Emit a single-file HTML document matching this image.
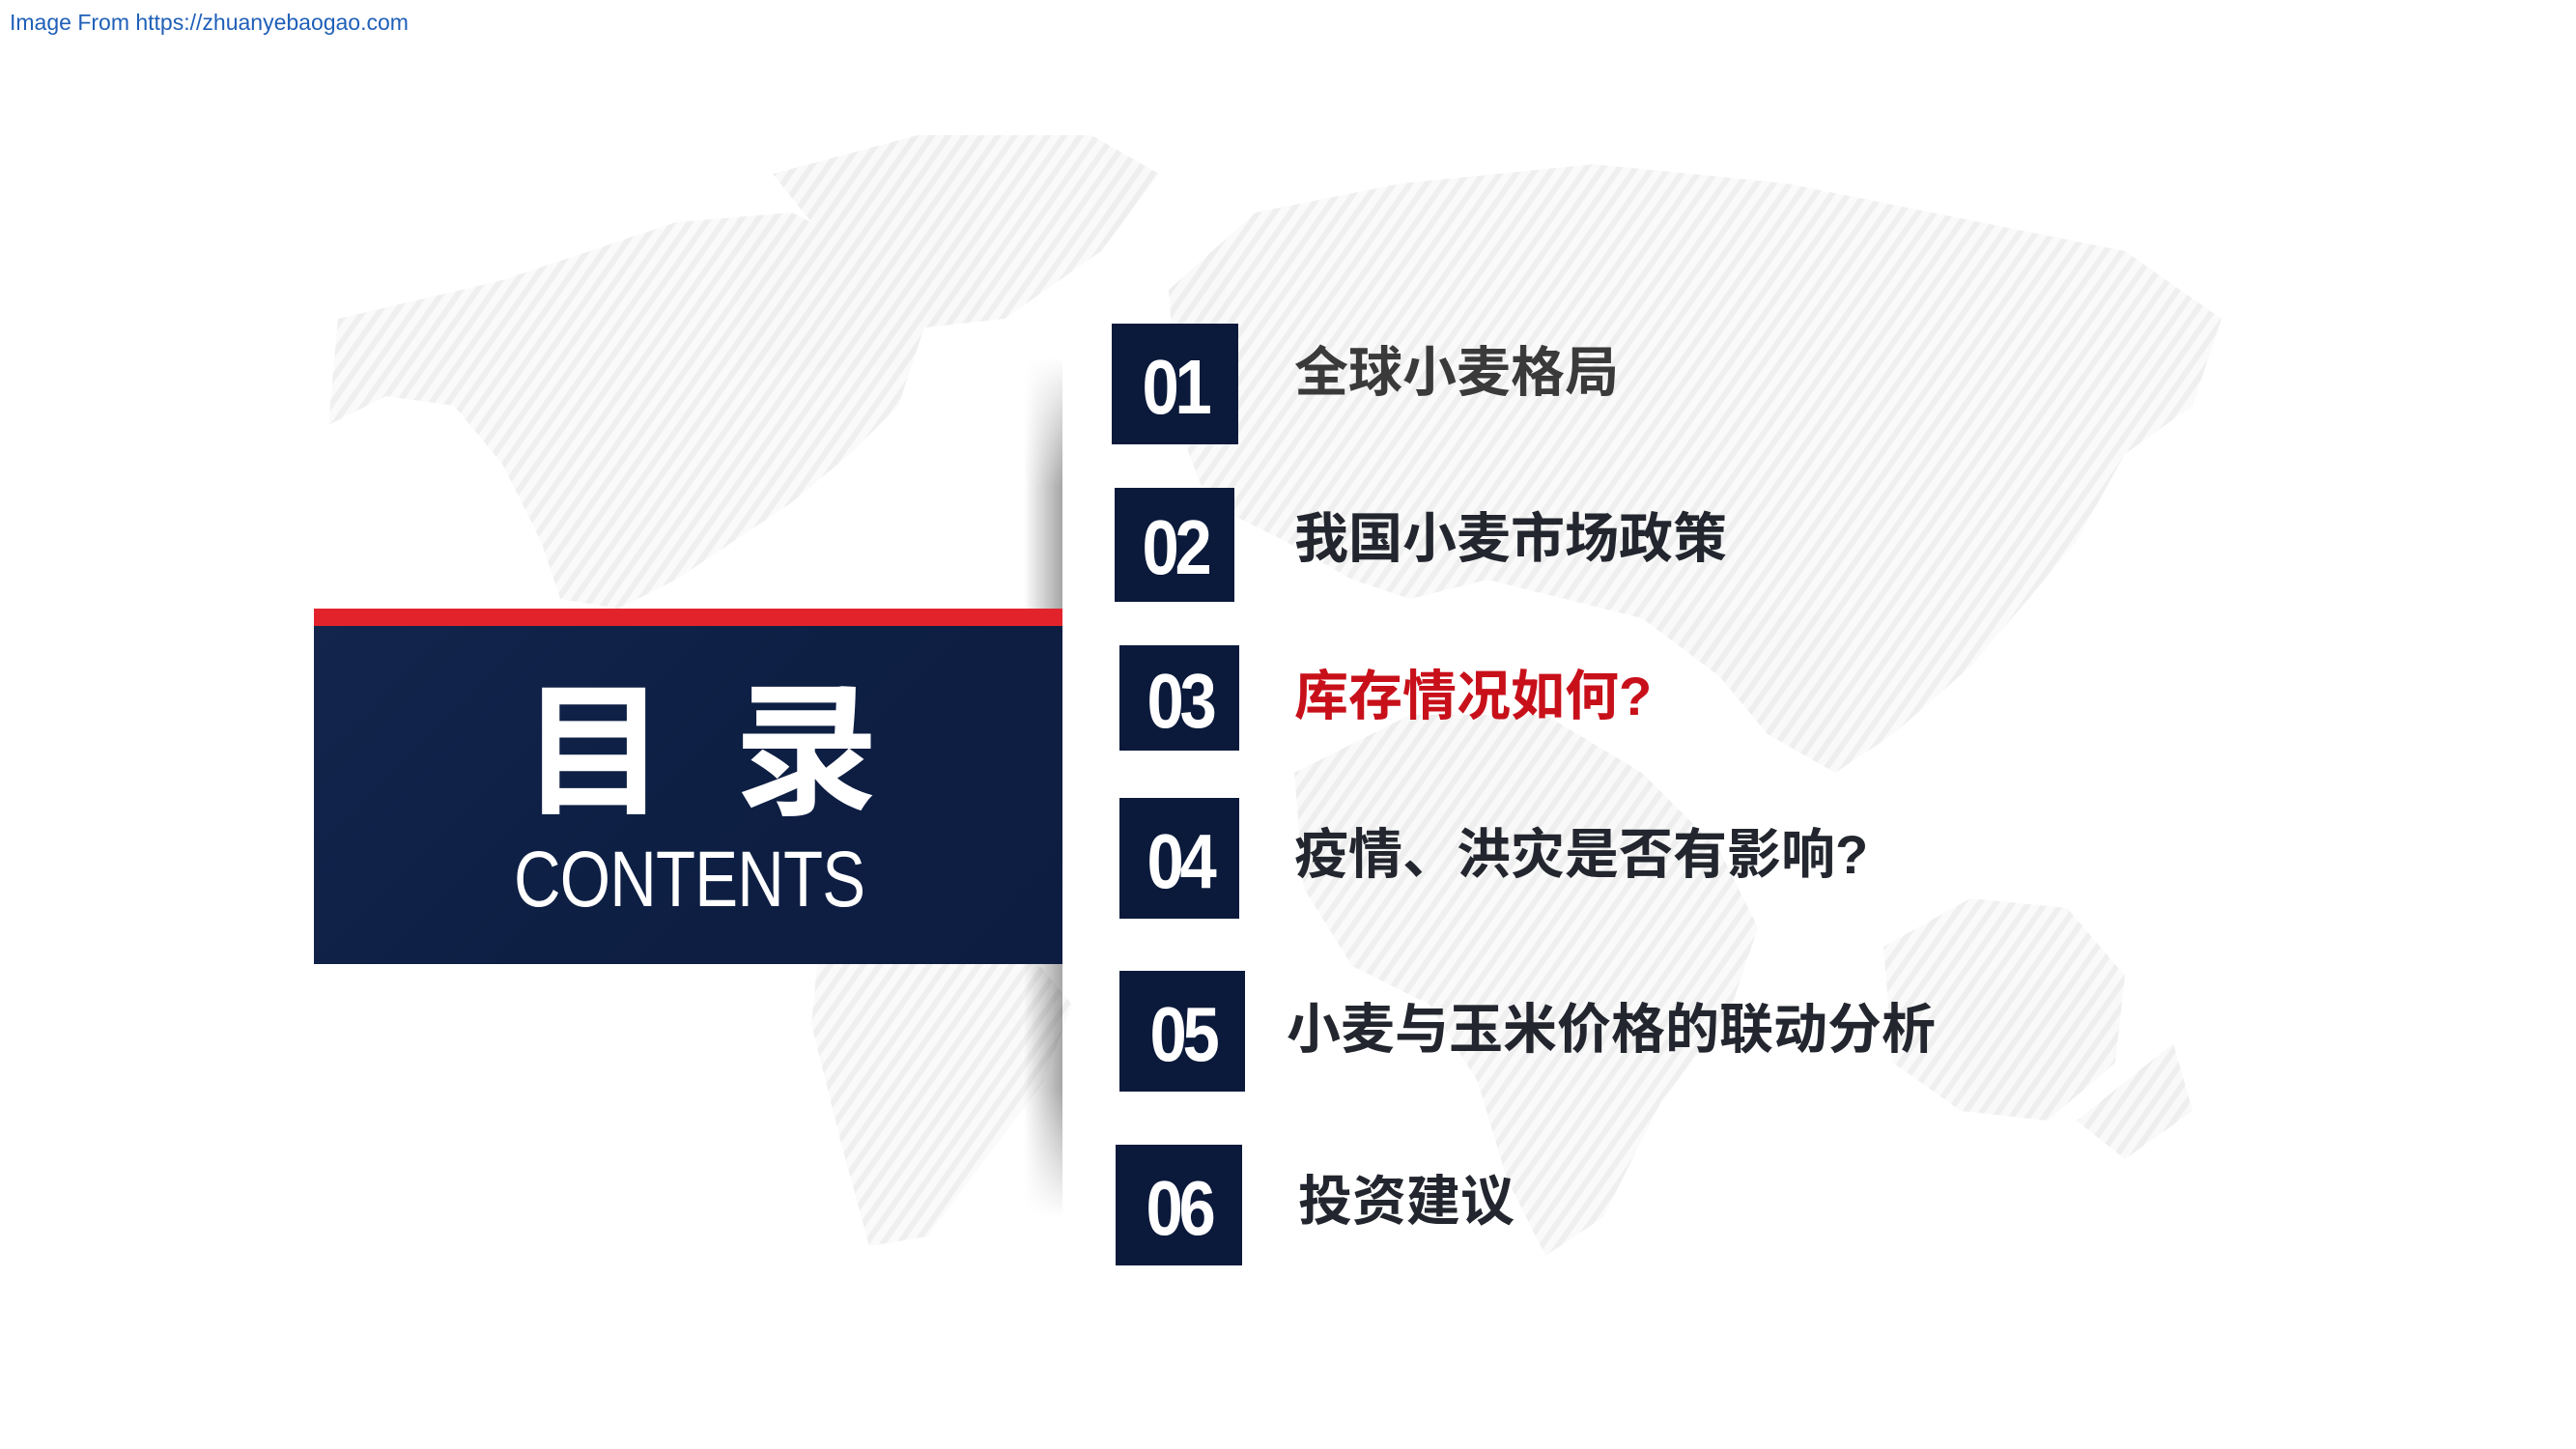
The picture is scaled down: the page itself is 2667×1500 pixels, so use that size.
<!DOCTYPE html>
<html><head><meta charset="utf-8"><style>
html,body{margin:0;padding:0;background:#fff;}
body{width:2667px;height:1500px;position:relative;overflow:hidden;font-family:"Liberation Sans","Noto Sans CJK SC",sans-serif;}
.abs{position:absolute;}
.hdr{left:10px;top:10px;font-size:23px;color:#1f5fb8;}
.num{position:absolute;background:#0b1a3b;color:#fff;display:flex;align-items:center;justify-content:center;}
.num span{font-family:"Liberation Sans",sans-serif;font-weight:bold;font-size:80px;transform:scaleX(0.86);letter-spacing:-5px;line-height:1;margin-top:6px;}
.item{position:absolute;font-family:"Liberation Sans","Noto Sans CJK SC",sans-serif;font-weight:700;font-size:56px;color:#23262e;line-height:1;white-space:nowrap;}
</style></head><body>
<div class="abs hdr">Image From https://zhuanyebaogao.com</div>

<svg class="abs" style="left:0;top:0" width="2667" height="1500">
<defs>
<pattern id="st" width="14" height="14" patternUnits="userSpaceOnUse" patternTransform="rotate(35)">
<rect width="14" height="14" fill="#f9f9f9"/><rect width="6" height="14" fill="#ececec"/>
</pattern>
</defs>
<g fill="url(#st)" opacity="0.85">
<path d="M350 330 L520 290 L700 230 L820 220 L900 260 L960 330 L930 420 L880 470 L820 520 L760 560 L700 600 L640 630 L580 620 L560 560 L520 480 L470 420 L400 410 L340 440 Z"/>
<path d="M800 180 L950 140 L1130 140 L1200 180 L1140 260 L1040 330 L950 340 L880 280 Z"/>
<path d="M850 960 L960 940 L1060 980 L1110 1040 L1080 1120 L1020 1200 L960 1280 L900 1290 L870 1180 L840 1060 Z"/>
<path d="M1210 300 L1300 220 L1450 190 L1650 170 L1850 190 L2050 230 L2200 260 L2300 330 L2270 420 L2200 470 L2150 560 L2100 620 L2040 690 L1960 760 L1900 800 L1830 760 L1780 700 L1700 640 L1620 620 L1540 600 L1460 620 L1400 600 L1330 560 L1250 520 L1220 440 Z"/>
<path d="M1340 800 L1460 740 L1600 740 L1700 800 L1780 880 L1820 960 L1790 1050 L1720 1140 L1660 1260 L1600 1300 L1560 1220 L1530 1120 L1480 1040 L1400 1000 L1350 920 Z"/>
<path d="M1950 980 L2040 930 L2140 940 L2200 1010 L2190 1100 L2120 1160 L2030 1150 L1960 1100 Z"/>
<path d="M2150 1160 L2250 1080 L2270 1150 L2200 1200 Z"/>
</g>
</svg>

<div class="abs" style="left:1060px;top:370px;width:40px;height:890px;background:linear-gradient(to right,rgba(0,0,0,0),rgba(0,0,0,0.35));-webkit-mask:linear-gradient(to bottom,transparent,#000 15%,#000 85%,transparent);mask:linear-gradient(to bottom,transparent,#000 15%,#000 85%,transparent);"></div>

<div class="abs" style="left:325px;top:630px;width:775px;height:18px;background:#e3232c;"></div>
<div class="abs" style="left:325px;top:648px;width:775px;height:350px;background:linear-gradient(135deg,#13254d,#0e1f44 50%,#0d1d41);"></div>
<div class="abs" style="left:540px;top:692px;color:#fff;font-family:'Noto Sans CJK SC',sans-serif;font-weight:700;font-size:150px;line-height:1;white-space:nowrap;letter-spacing:70px;">目录</div>
<div class="abs" style="left:532px;top:870px;color:#fff;font-family:'Liberation Sans',sans-serif;font-weight:normal;font-size:82px;line-height:1;transform-origin:0 0;transform:scaleX(0.82);white-space:nowrap;letter-spacing:-1px;">CONTENTS</div>

<div class="num" style="left:1151px;top:335px;width:131px;height:125px;"><span>01</span></div>
<div class="num" style="left:1154px;top:505px;width:124px;height:118px;"><span>02</span></div>
<div class="num" style="left:1159px;top:668px;width:124px;height:109px;"><span>03</span></div>
<div class="num" style="left:1159px;top:826px;width:124px;height:125px;"><span>04</span></div>
<div class="num" style="left:1159px;top:1005px;width:130px;height:125px;"><span>05</span></div>
<div class="num" style="left:1155px;top:1185px;width:131px;height:125px;"><span>06</span></div>

<div class="item" style="left:1340px;top:358px;color:#3a3a3a;">全球小麦格局</div>
<div class="item" style="left:1340px;top:530px;">我国小麦市场政策</div>
<div class="item" style="left:1340px;top:693px;color:#c8101a;">库存情况如何?</div>
<div class="item" style="left:1340px;top:857px;">疫情、洪灾是否有影响?</div>
<div class="item" style="left:1332px;top:1038px;">小麦与玉米价格的联动分析</div>
<div class="item" style="left:1344px;top:1216px;">投资建议</div>
</body></html>
